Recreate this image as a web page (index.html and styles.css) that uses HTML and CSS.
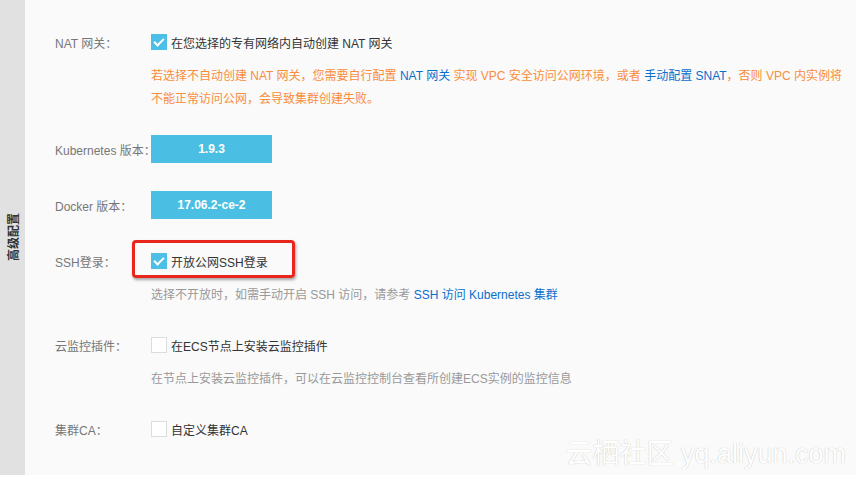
FILE: index.html
```html
<!DOCTYPE html>
<html lang="zh-CN">

<head>
    <meta charset="UTF-8">
    <title>高级配置</title>
    <link rel="stylesheet" href="styles.css">
</head>

<body>
    <div class="panel">
        <div class="side-title"><span>高级配置</span></div>

        <div class="form">
            <div class="form-item">
                <div class="form-row">
                    <label class="form-label">NAT 网关：</label>
                    <label class="checkbox">
                        <span class="box checked"></span>
                        在您选择的专有网络内自动创建 NAT 网关
                    </label>
                </div>
                <p class="help warn">若选择不自动创建 NAT 网关，您需要自行配置 <a href="#">NAT 网关</a> 实现 VPC 安全访问公网环境，或者 <a href="#">手动配置 SNAT</a>，否则 VPC 内实例将<br>不能正常访问公网，会导致集群创建失败。</p>
            </div>

            <div class="form-item version">
                <div class="form-row">
                    <label class="form-label">Kubernetes 版本：</label>
                    <span class="version-tag">1.9.3</span>
                </div>
            </div>

            <div class="form-item version">
                <div class="form-row">
                    <label class="form-label">Docker 版本：</label>
                    <span class="version-tag">17.06.2-ce-2</span>
                </div>
            </div>

            <div class="form-item">
                <div class="form-row">
                    <label class="form-label">SSH登录：</label>
                    <label class="checkbox marked">
                        <span class="box checked"></span>
                        开放公网SSH登录
                        <span class="mark"></span>
                    </label>
                </div>
                <p class="help">选择不开放时，如需手动开启 SSH 访问，请参考 <a href="#">SSH 访问 Kubernetes 集群</a></p>
            </div>

            <div class="form-item">
                <div class="form-row">
                    <label class="form-label">云监控插件：</label>
                    <label class="checkbox">
                        <span class="box"></span>
                        在ECS节点上安装云监控插件
                    </label>
                </div>
                <p class="help">在节点上安装云监控插件，可以在云监控控制台查看所创建ECS实例的监控信息</p>
            </div>

            <div class="form-item">
                <div class="form-row">
                    <label class="form-label">集群CA：</label>
                    <label class="checkbox">
                        <span class="box"></span>
                        自定义集群CA
                    </label>
                </div>
            </div>
        </div>

        <div class="watermark">云栖社区 yq.aliyun.com</div>
    </div>
</body>

</html>
```

FILE: styles.css
```css
body {
    margin: 0;
    background-color: #fff;
    font-family: "Liberation Sans", "Noto Sans CJK SC", sans-serif;
    font-size: 12px;
    color: #333;
}

.panel {
    position: relative;
    display: flex;
    height: 475px;
    background-color: #fafafa;
    overflow: hidden;
}

.side-title {
    width: 25px;
    flex-shrink: 0;
    background-color: #e1e1e1;
    display: flex;
    align-items: center;
    justify-content: center;
}

.side-title span {
    writing-mode: vertical-rl;
    text-orientation: sideways;
    transform: rotate(180deg);
    font-weight: bold;
    color: #333;
}

.form {
    padding: 28px 0 0 30px;
    flex-grow: 1;
}

.form-item {
    margin-bottom: 24px;
}

.form-item.version {
    margin-bottom: 28px;
}

.form-row {
    display: flex;
    align-items: center;
    height: 28px;
}

.form-label {
    width: 96px;
    flex-shrink: 0;
    color: #777;
    white-space: nowrap;
}

.checkbox {
    position: relative;
    display: flex;
    align-items: center;
    gap: 4px;
    color: #333;
}

.box {
    width: 14px;
    height: 14px;
    border: 1px solid #dcdcdc;
    background-color: #fff;
    position: relative;
}

.box.checked {
    background-color: #4bbfe5;
    border-color: #4bbfe5;
}

.box.checked::after {
    content: "";
    position: absolute;
    left: 4px;
    top: 1px;
    width: 4px;
    height: 8px;
    border: solid #fff;
    border-width: 0 2.5px 2.5px 0;
    transform: rotate(45deg);
}

/* red annotation frame from the screenshot */
.mark {
    position: absolute;
    left: -19px;
    top: -13px;
    width: 157px;
    height: 32px;
    border: 3px solid #e9261d;
    border-radius: 4px;
    box-shadow: 1px 2px 3px rgba(0, 0, 0, 0.35);
}

.version-tag {
    width: 121px;
    height: 28px;
    line-height: 28px;
    text-align: center;
    background-color: #4bbfe3;
    color: #fff;
    font-weight: bold;
}

.help {
    margin: 9px 0 0 96px;
    line-height: 23px;
    color: #999;
}

.help.warn {
    color: #f98d3b;
}

.help a {
    color: #0b6fcd;
    text-decoration: none;
}

.watermark {
    position: absolute;
    right: 10px;
    bottom: 4px;
    font-size: 27px;
    color: #fff;
    text-shadow: 0 0 1px rgba(0, 0, 0, 0.3);
}
```
